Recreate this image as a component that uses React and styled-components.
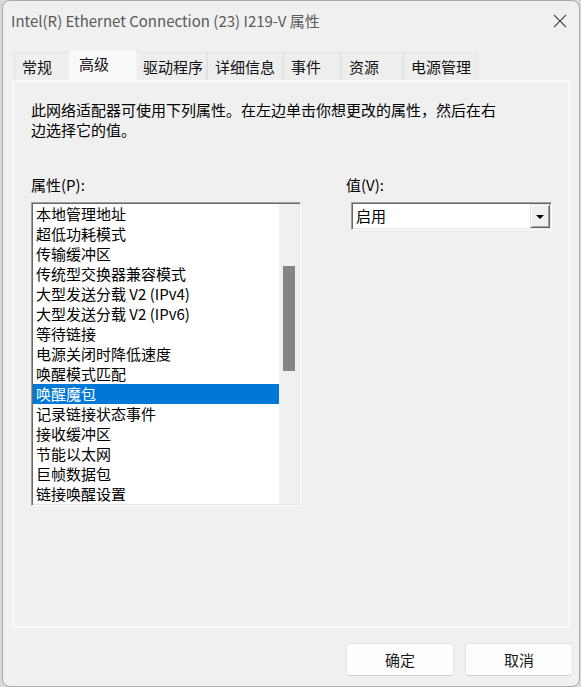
import React from "react";
import styled, { createGlobalStyle } from "styled-components";

const Global = createGlobalStyle`
  html, body { margin: 0; padding: 0; }
  body {
    background: #d9d9d9;
    font-family: "Noto Sans CJK SC", "Noto Sans", sans-serif;
    overflow: hidden;
  }
`;

const Dialog = styled.div`
  box-sizing: border-box;
  margin-left: 2px;
  width: 578px;
  height: 687px;
  background: #f0f0f0;
  border: 1px solid #ababab;
  border-radius: 8px;
  display: flex;
  flex-direction: column;
  overflow: hidden;
`;

const TitleBar = styled.div`
  height: 39px;
  display: flex;
  align-items: center;
  justify-content: space-between;
  padding: 0 12px 0 8px;
  font-size: 15px;
  color: #5a5a5a;
`;

const TitleText = styled.span`
  line-height: 20px;
  margin-top: 1px;
`;

const CloseIcon = () => (
  <svg width="14" height="14" viewBox="0 0 14 14">
    <path d="M1 1 L13 13 M13 1 L1 13" stroke="#4a4a4a" strokeWidth="1.1" fill="none" />
  </svg>
);

const TabStrip = styled.div`
  height: 40px;
  display: flex;
  align-items: flex-end;
  padding-left: 11px;
  position: relative;
  z-index: 1;
`;

const Tab = styled.div`
  box-sizing: border-box;
  width: ${(p) => (p.$active ? p.$w + 4 : p.$w)}px;
  height: ${(p) => (p.$active ? 31 : 28)}px;
  margin: 0 ${(p) => (p.$active ? -2 : 0)}px ${(p) => (p.$active ? -1 : 0)}px;
  padding: ${(p) => (p.$active ? "3px 0 0 9px" : "4px 0 0 7px")};
  background: ${(p) => (p.$active ? "#f9f9f9" : "#eeeeee")};
  border: 1px solid ${(p) => (p.$active ? "#f4f4f4" : "#e3e3e3")};
  border-bottom: none;
  font-size: 15px;
  line-height: 20px;
  color: #111;
  white-space: nowrap;
  position: relative;
  z-index: ${(p) => (p.$active ? 2 : 1)};
`;

const Panel = styled.div`
  box-sizing: border-box;
  margin-left: 9px;
  width: 558px;
  height: 548px;
  background: #f0f0f0;
  border: 2px solid #f9f9f9;
  padding: 18px 0 0 17px;
  display: flex;
  flex-direction: column;
`;

const Description = styled.p`
  margin: 0;
  max-width: 472px;
  font-size: 15px;
  line-height: 20px;
  color: #000;
`;

const Columns = styled.div`
  display: flex;
  margin-top: 35px;
`;

const Column = styled.div`
  display: flex;
  flex-direction: column;
  width: ${(p) => p.$w}px;
  margin-left: ${(p) => p.$ml || 0}px;
`;

const Label = styled.div`
  font-size: 15px;
  line-height: 20px;
  color: #000;
  margin-bottom: 7px;
`;

const Sunken = styled.div`
  box-sizing: border-box;
  border: 1px solid;
  border-color: #a0a0a0 #ffffff #ffffff #a0a0a0;
  box-shadow: inset 1px 1px 0 #696969, inset -1px -1px 0 #e3e3e3;
  background: #fff;
  padding: 1px;
`;

const ListBox = styled(Sunken)`
  width: 270px;
  height: 304px;
  display: flex;
`;

const Items = styled.ul`
  list-style: none;
  margin: 0;
  padding: 0;
  flex: 1;
  overflow: hidden;
`;

const Item = styled.li`
  height: 20px;
  line-height: 20px;
  padding-left: 3px;
  font-size: 15px;
  white-space: nowrap;
  color: ${(p) => (p.$selected ? "#fff" : "#000")};
  background: ${(p) => (p.$selected ? "#0078d7" : "transparent")};
`;

const ScrollTrack = styled.div`
  width: 20px;
  background: #f0f0f0;
  position: relative;
`;

const ScrollThumb = styled.div`
  position: absolute;
  left: 4px;
  width: 12px;
  top: 62px;
  height: 105px;
  background: #858585;
`;

const Combo = styled(Sunken)`
  width: 201px;
  height: 28px;
  margin-left: 5px;
  display: flex;
  align-items: stretch;
`;

const ComboValue = styled.div`
  flex: 1;
  font-size: 15px;
  line-height: 24px;
  padding-left: 3px;
  color: #000;
`;

const DropButton = styled.div`
  box-sizing: border-box;
  width: 20px;
  background: #f0f0f0;
  border: 1px solid;
  border-color: #e3e3e3 #696969 #696969 #e3e3e3;
  box-shadow: inset 1px 1px 0 #ffffff, inset -1px -1px 0 #a0a0a0;
  display: flex;
  align-items: center;
  justify-content: center;
`;

const Arrow = styled.div`
  width: 0;
  height: 0;
  border-left: 4px solid transparent;
  border-right: 4px solid transparent;
  border-top: 4px solid #000;
  margin-top: 1px;
`;

const Footer = styled.div`
  display: flex;
  justify-content: flex-end;
  gap: 11px;
  padding: 15px 6px 0 0;
`;

const Button = styled.button`
  box-sizing: border-box;
  width: 108px;
  height: 33px;
  background: #fdfdfd;
  border: 1px solid #e2e2e2;
  border-bottom-color: #cfcfcf;
  border-radius: 4px;
  font-family: "Noto Sans CJK SC", "Noto Sans", sans-serif;
  font-size: 15px;
  color: #1b1b1b;
  padding: 0;
`;

const tabs = [
  { label: "常规", w: 57 },
  { label: "高级", w: 64, active: true },
  { label: "驱动程序", w: 72 },
  { label: "详细信息", w: 76 },
  { label: "事件", w: 58 },
  { label: "资源", w: 62 },
  { label: "电源管理", w: 74 },
];

const properties = [
  "本地管理地址",
  "超低功耗模式",
  "传输缓冲区",
  "传统型交换器兼容模式",
  "大型发送分载 V2 (IPv4)",
  "大型发送分载 V2 (IPv6)",
  "等待链接",
  "电源关闭时降低速度",
  "唤醒模式匹配",
  "唤醒魔包",
  "记录链接状态事件",
  "接收缓冲区",
  "节能以太网",
  "巨帧数据包",
  "链接唤醒设置",
];

export default function App() {
  return (
    <>
      <Global />
      <Dialog>
        <TitleBar>
          <TitleText>Intel(R) Ethernet Connection (23) I219-V 属性</TitleText>
          <CloseIcon />
        </TitleBar>
        <TabStrip>
          {tabs.map((t) => (
            <Tab key={t.label} $w={t.w} $active={t.active}>
              {t.label}
            </Tab>
          ))}
        </TabStrip>
        <Panel>
          <Description>
            此网络适配器可使用下列属性。在左边单击你想更改的属性，然后在右边选择它的值。
          </Description>
          <Columns>
            <Column $w={270}>
              <Label>属性(P):</Label>
              <ListBox>
                <Items>
                  {properties.map((p) => (
                    <Item key={p} $selected={p === "唤醒魔包"}>
                      {p}
                    </Item>
                  ))}
                </Items>
                <ScrollTrack>
                  <ScrollThumb />
                </ScrollTrack>
              </ListBox>
            </Column>
            <Column $w={210} $ml={45}>
              <Label>值(V):</Label>
              <Combo>
                <ComboValue>启用</ComboValue>
                <DropButton>
                  <Arrow />
                </DropButton>
              </Combo>
            </Column>
          </Columns>
        </Panel>
        <Footer>
          <Button>确定</Button>
          <Button>取消</Button>
        </Footer>
      </Dialog>
    </>
  );
}
